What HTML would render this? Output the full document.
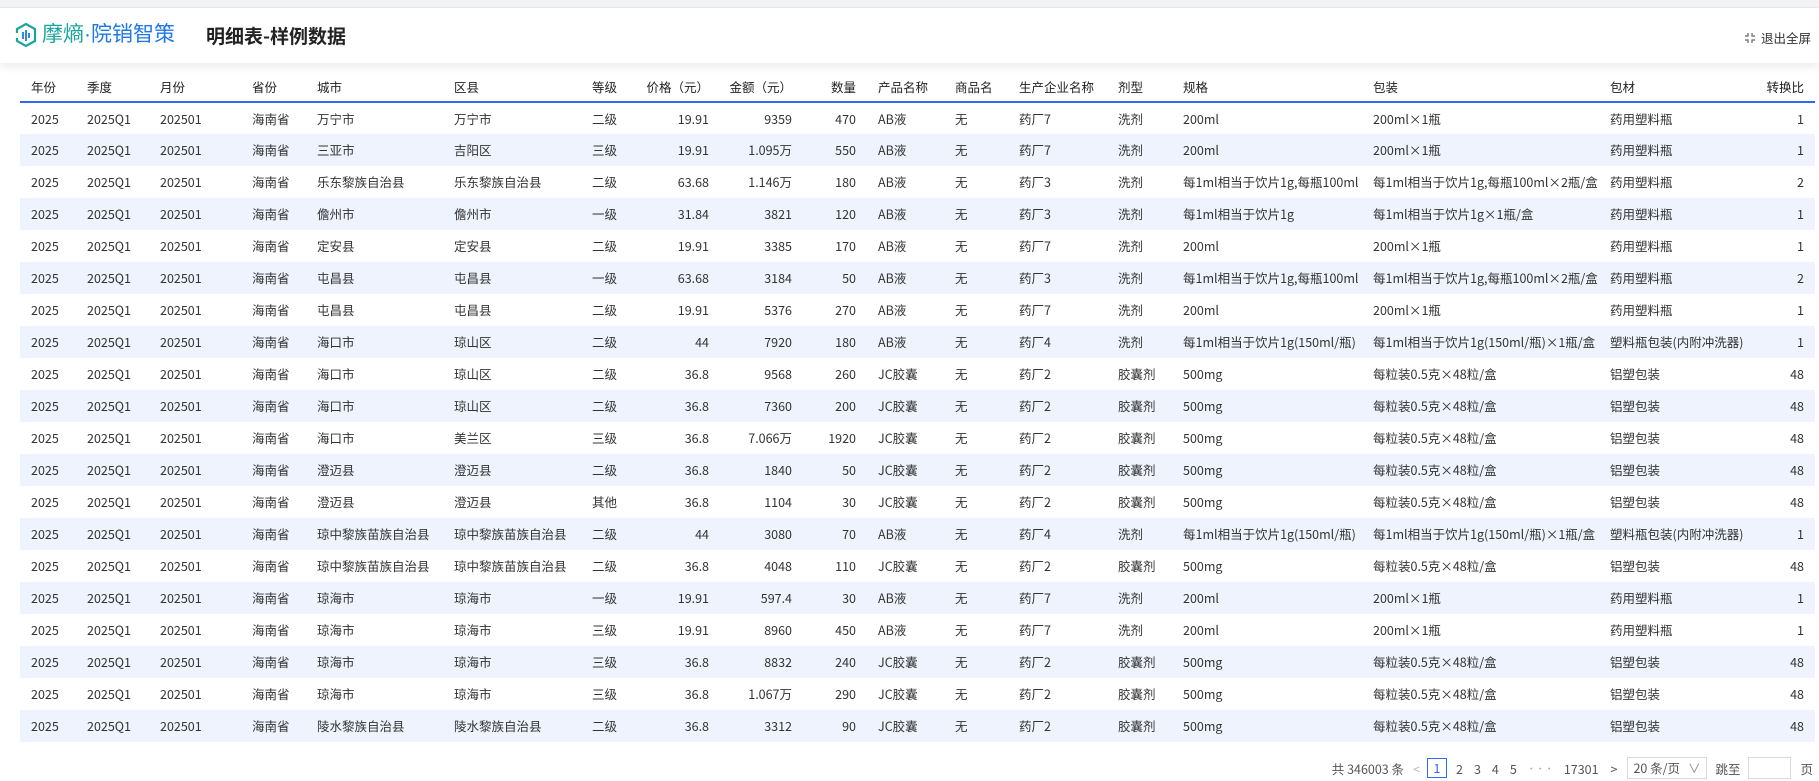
<!DOCTYPE html>
<html><head><meta charset="utf-8"><style>
*{margin:0;padding:0;box-sizing:border-box}
body{width:1819px;height:781px;overflow:hidden;background:#fff;font-family:"Noto Sans CJK SC","Liberation Sans",sans-serif;color:#333;position:relative}
.top{position:absolute;left:0;top:0;width:1819px;height:8px;background:#f2f3f5;border-bottom:1px solid #e8e8e8}
.hdr{position:absolute;left:0;top:8px;width:1819px;height:55px;background:#fff;box-shadow:0 4px 8px rgba(0,0,0,0.08)}
.logo{position:absolute;left:14px;top:13px;display:flex;align-items:center}
.logo span{font-size:21px;line-height:28px;font-family:"Liberation Sans","Noto Sans CJK SC",sans-serif}
.title{position:absolute;left:206px;top:14px;font-size:19px;font-weight:bold;color:#222;line-height:28px}
.exit{position:absolute;right:8px;top:20px;font-size:12.5px;color:#333;display:flex;align-items:center;gap:5px}
table{position:absolute;left:20px;top:72px;border-collapse:collapse;table-layout:fixed;width:1795px;font-size:12.5px}
th{font-weight:normal;color:#222;height:30px;text-align:left;padding-left:11px;border-bottom:2px solid #2f6bf0;white-space:nowrap;line-height:16px}
td{height:32px;padding-left:11px;white-space:nowrap;overflow:visible;line-height:16px;vertical-align:middle}
tbody tr:nth-child(even) td{background:#eef3fd}
.r{text-align:right;padding-left:0;padding-right:11px}
.pg{position:absolute;top:757px;right:6px;font-size:12.5px;color:#555;display:flex;align-items:center;height:22px;white-space:nowrap}
.pg span{white-space:nowrap}
.pg .b{border:1px solid #2f6bf0;color:#2f6bf0;width:20px;height:20px;text-align:center;line-height:18px}
.sel{border:1px solid #d9d9d9;height:22px;width:80px;padding-left:5px;line-height:20px;position:relative}
.inp{border:1px solid #d9d9d9;height:22px;width:43px}
</style></head><body>
<div class="top"></div>
<div class="hdr">
<div class="logo"><svg width="24" height="26" viewBox="0 0 24 26"><path d="M12 2 L21 7 L21 19 L12 24 L3 19 L3 7 Z" fill="none" stroke="#1aa59a" stroke-width="2.2"/><g stroke="#1e78e6" stroke-width="1.8"><line x1="9" y1="10" x2="9" y2="17"/><line x1="12" y1="8" x2="12" y2="19"/><line x1="15" y1="11" x2="15" y2="16"/></g><rect x="0" y="11" width="4" height="5" fill="#fff"/></svg><span style="color:#1aa59a;margin-left:4px">摩熵</span><span style="color:#1e78e6">·院销智策</span></div>
<div class="title">明细表-样例数据</div>
<div class="exit"><svg width="12" height="12" viewBox="0 0 12 12" fill="none" stroke="#666" stroke-width="1.2"><path d="M4 1v3H1M8 1v3h3M4 11V8H1M8 11V8h3"/></svg>退出全屏</div>
</div>
<table>
<colgroup><col style="width:56px"><col style="width:73px"><col style="width:92px"><col style="width:65px"><col style="width:137px"><col style="width:138px"><col style="width:44px"><col style="width:95px"><col style="width:83px"><col style="width:64px"><col style="width:77px"><col style="width:64px"><col style="width:99px"><col style="width:65px"><col style="width:190px"><col style="width:237px"><col style="width:101px"><col style="width:115px"></colgroup>
<thead><tr><th>年份</th><th>季度</th><th>月份</th><th>省份</th><th>城市</th><th>区县</th><th>等级</th><th class="r">价格（元）</th><th class="r">金额（元）</th><th class="r">数量</th><th>产品名称</th><th>商品名</th><th>生产企业名称</th><th>剂型</th><th>规格</th><th>包装</th><th>包材</th><th class="r">转换比</th></tr></thead>
<tbody>
<tr><td>2025</td><td>2025Q1</td><td>202501</td><td>海南省</td><td>万宁市</td><td>万宁市</td><td>二级</td><td class="r">19.91</td><td class="r">9359</td><td class="r">470</td><td>AB液</td><td>无</td><td>药厂7</td><td>洗剂</td><td>200ml</td><td>200ml×1瓶</td><td>药用塑料瓶</td><td class="r">1</td></tr>
<tr><td>2025</td><td>2025Q1</td><td>202501</td><td>海南省</td><td>三亚市</td><td>吉阳区</td><td>三级</td><td class="r">19.91</td><td class="r">1.095万</td><td class="r">550</td><td>AB液</td><td>无</td><td>药厂7</td><td>洗剂</td><td>200ml</td><td>200ml×1瓶</td><td>药用塑料瓶</td><td class="r">1</td></tr>
<tr><td>2025</td><td>2025Q1</td><td>202501</td><td>海南省</td><td>乐东黎族自治县</td><td>乐东黎族自治县</td><td>二级</td><td class="r">63.68</td><td class="r">1.146万</td><td class="r">180</td><td>AB液</td><td>无</td><td>药厂3</td><td>洗剂</td><td>每1ml相当于饮片1g,每瓶100ml</td><td>每1ml相当于饮片1g,每瓶100ml×2瓶/盒</td><td>药用塑料瓶</td><td class="r">2</td></tr>
<tr><td>2025</td><td>2025Q1</td><td>202501</td><td>海南省</td><td>儋州市</td><td>儋州市</td><td>一级</td><td class="r">31.84</td><td class="r">3821</td><td class="r">120</td><td>AB液</td><td>无</td><td>药厂3</td><td>洗剂</td><td>每1ml相当于饮片1g</td><td>每1ml相当于饮片1g×1瓶/盒</td><td>药用塑料瓶</td><td class="r">1</td></tr>
<tr><td>2025</td><td>2025Q1</td><td>202501</td><td>海南省</td><td>定安县</td><td>定安县</td><td>二级</td><td class="r">19.91</td><td class="r">3385</td><td class="r">170</td><td>AB液</td><td>无</td><td>药厂7</td><td>洗剂</td><td>200ml</td><td>200ml×1瓶</td><td>药用塑料瓶</td><td class="r">1</td></tr>
<tr><td>2025</td><td>2025Q1</td><td>202501</td><td>海南省</td><td>屯昌县</td><td>屯昌县</td><td>一级</td><td class="r">63.68</td><td class="r">3184</td><td class="r">50</td><td>AB液</td><td>无</td><td>药厂3</td><td>洗剂</td><td>每1ml相当于饮片1g,每瓶100ml</td><td>每1ml相当于饮片1g,每瓶100ml×2瓶/盒</td><td>药用塑料瓶</td><td class="r">2</td></tr>
<tr><td>2025</td><td>2025Q1</td><td>202501</td><td>海南省</td><td>屯昌县</td><td>屯昌县</td><td>二级</td><td class="r">19.91</td><td class="r">5376</td><td class="r">270</td><td>AB液</td><td>无</td><td>药厂7</td><td>洗剂</td><td>200ml</td><td>200ml×1瓶</td><td>药用塑料瓶</td><td class="r">1</td></tr>
<tr><td>2025</td><td>2025Q1</td><td>202501</td><td>海南省</td><td>海口市</td><td>琼山区</td><td>二级</td><td class="r">44</td><td class="r">7920</td><td class="r">180</td><td>AB液</td><td>无</td><td>药厂4</td><td>洗剂</td><td>每1ml相当于饮片1g(150ml/瓶)</td><td>每1ml相当于饮片1g(150ml/瓶)×1瓶/盒</td><td>塑料瓶包装(内附冲洗器)</td><td class="r">1</td></tr>
<tr><td>2025</td><td>2025Q1</td><td>202501</td><td>海南省</td><td>海口市</td><td>琼山区</td><td>二级</td><td class="r">36.8</td><td class="r">9568</td><td class="r">260</td><td>JC胶囊</td><td>无</td><td>药厂2</td><td>胶囊剂</td><td>500mg</td><td>每粒装0.5克×48粒/盒</td><td>铝塑包装</td><td class="r">48</td></tr>
<tr><td>2025</td><td>2025Q1</td><td>202501</td><td>海南省</td><td>海口市</td><td>琼山区</td><td>二级</td><td class="r">36.8</td><td class="r">7360</td><td class="r">200</td><td>JC胶囊</td><td>无</td><td>药厂2</td><td>胶囊剂</td><td>500mg</td><td>每粒装0.5克×48粒/盒</td><td>铝塑包装</td><td class="r">48</td></tr>
<tr><td>2025</td><td>2025Q1</td><td>202501</td><td>海南省</td><td>海口市</td><td>美兰区</td><td>三级</td><td class="r">36.8</td><td class="r">7.066万</td><td class="r">1920</td><td>JC胶囊</td><td>无</td><td>药厂2</td><td>胶囊剂</td><td>500mg</td><td>每粒装0.5克×48粒/盒</td><td>铝塑包装</td><td class="r">48</td></tr>
<tr><td>2025</td><td>2025Q1</td><td>202501</td><td>海南省</td><td>澄迈县</td><td>澄迈县</td><td>二级</td><td class="r">36.8</td><td class="r">1840</td><td class="r">50</td><td>JC胶囊</td><td>无</td><td>药厂2</td><td>胶囊剂</td><td>500mg</td><td>每粒装0.5克×48粒/盒</td><td>铝塑包装</td><td class="r">48</td></tr>
<tr><td>2025</td><td>2025Q1</td><td>202501</td><td>海南省</td><td>澄迈县</td><td>澄迈县</td><td>其他</td><td class="r">36.8</td><td class="r">1104</td><td class="r">30</td><td>JC胶囊</td><td>无</td><td>药厂2</td><td>胶囊剂</td><td>500mg</td><td>每粒装0.5克×48粒/盒</td><td>铝塑包装</td><td class="r">48</td></tr>
<tr><td>2025</td><td>2025Q1</td><td>202501</td><td>海南省</td><td>琼中黎族苗族自治县</td><td>琼中黎族苗族自治县</td><td>二级</td><td class="r">44</td><td class="r">3080</td><td class="r">70</td><td>AB液</td><td>无</td><td>药厂4</td><td>洗剂</td><td>每1ml相当于饮片1g(150ml/瓶)</td><td>每1ml相当于饮片1g(150ml/瓶)×1瓶/盒</td><td>塑料瓶包装(内附冲洗器)</td><td class="r">1</td></tr>
<tr><td>2025</td><td>2025Q1</td><td>202501</td><td>海南省</td><td>琼中黎族苗族自治县</td><td>琼中黎族苗族自治县</td><td>二级</td><td class="r">36.8</td><td class="r">4048</td><td class="r">110</td><td>JC胶囊</td><td>无</td><td>药厂2</td><td>胶囊剂</td><td>500mg</td><td>每粒装0.5克×48粒/盒</td><td>铝塑包装</td><td class="r">48</td></tr>
<tr><td>2025</td><td>2025Q1</td><td>202501</td><td>海南省</td><td>琼海市</td><td>琼海市</td><td>一级</td><td class="r">19.91</td><td class="r">597.4</td><td class="r">30</td><td>AB液</td><td>无</td><td>药厂7</td><td>洗剂</td><td>200ml</td><td>200ml×1瓶</td><td>药用塑料瓶</td><td class="r">1</td></tr>
<tr><td>2025</td><td>2025Q1</td><td>202501</td><td>海南省</td><td>琼海市</td><td>琼海市</td><td>三级</td><td class="r">19.91</td><td class="r">8960</td><td class="r">450</td><td>AB液</td><td>无</td><td>药厂7</td><td>洗剂</td><td>200ml</td><td>200ml×1瓶</td><td>药用塑料瓶</td><td class="r">1</td></tr>
<tr><td>2025</td><td>2025Q1</td><td>202501</td><td>海南省</td><td>琼海市</td><td>琼海市</td><td>三级</td><td class="r">36.8</td><td class="r">8832</td><td class="r">240</td><td>JC胶囊</td><td>无</td><td>药厂2</td><td>胶囊剂</td><td>500mg</td><td>每粒装0.5克×48粒/盒</td><td>铝塑包装</td><td class="r">48</td></tr>
<tr><td>2025</td><td>2025Q1</td><td>202501</td><td>海南省</td><td>琼海市</td><td>琼海市</td><td>三级</td><td class="r">36.8</td><td class="r">1.067万</td><td class="r">290</td><td>JC胶囊</td><td>无</td><td>药厂2</td><td>胶囊剂</td><td>500mg</td><td>每粒装0.5克×48粒/盒</td><td>铝塑包装</td><td class="r">48</td></tr>
<tr><td>2025</td><td>2025Q1</td><td>202501</td><td>海南省</td><td>陵水黎族自治县</td><td>陵水黎族自治县</td><td>二级</td><td class="r">36.8</td><td class="r">3312</td><td class="r">90</td><td>JC胶囊</td><td>无</td><td>药厂2</td><td>胶囊剂</td><td>500mg</td><td>每粒装0.5克×48粒/盒</td><td>铝塑包装</td><td class="r">48</td></tr>
</tbody>
</table>
<div class="pg">
<span>共 346003 条</span>
<span style="margin-left:9px;color:#bbb">&lt;</span>
<span class="b" style="margin-left:7px">1</span>
<span style="margin-left:9px">2</span><span style="margin-left:11px">3</span><span style="margin-left:11px">4</span><span style="margin-left:11px">5</span>
<span style="margin-left:10px;color:#aaa;font-size:9px">•••</span>
<span style="margin-left:10px">17301</span>
<span style="margin-left:12px">&gt;</span>
<span class="sel" style="margin-left:10px">20 条/页<span style="position:absolute;right:6px;top:0;color:#888">∨</span></span>
<span style="margin-left:8px">跳至</span>
<span class="inp" style="margin-left:8px"></span>
<span style="margin-left:9px">页</span>
</div>
</body></html>
